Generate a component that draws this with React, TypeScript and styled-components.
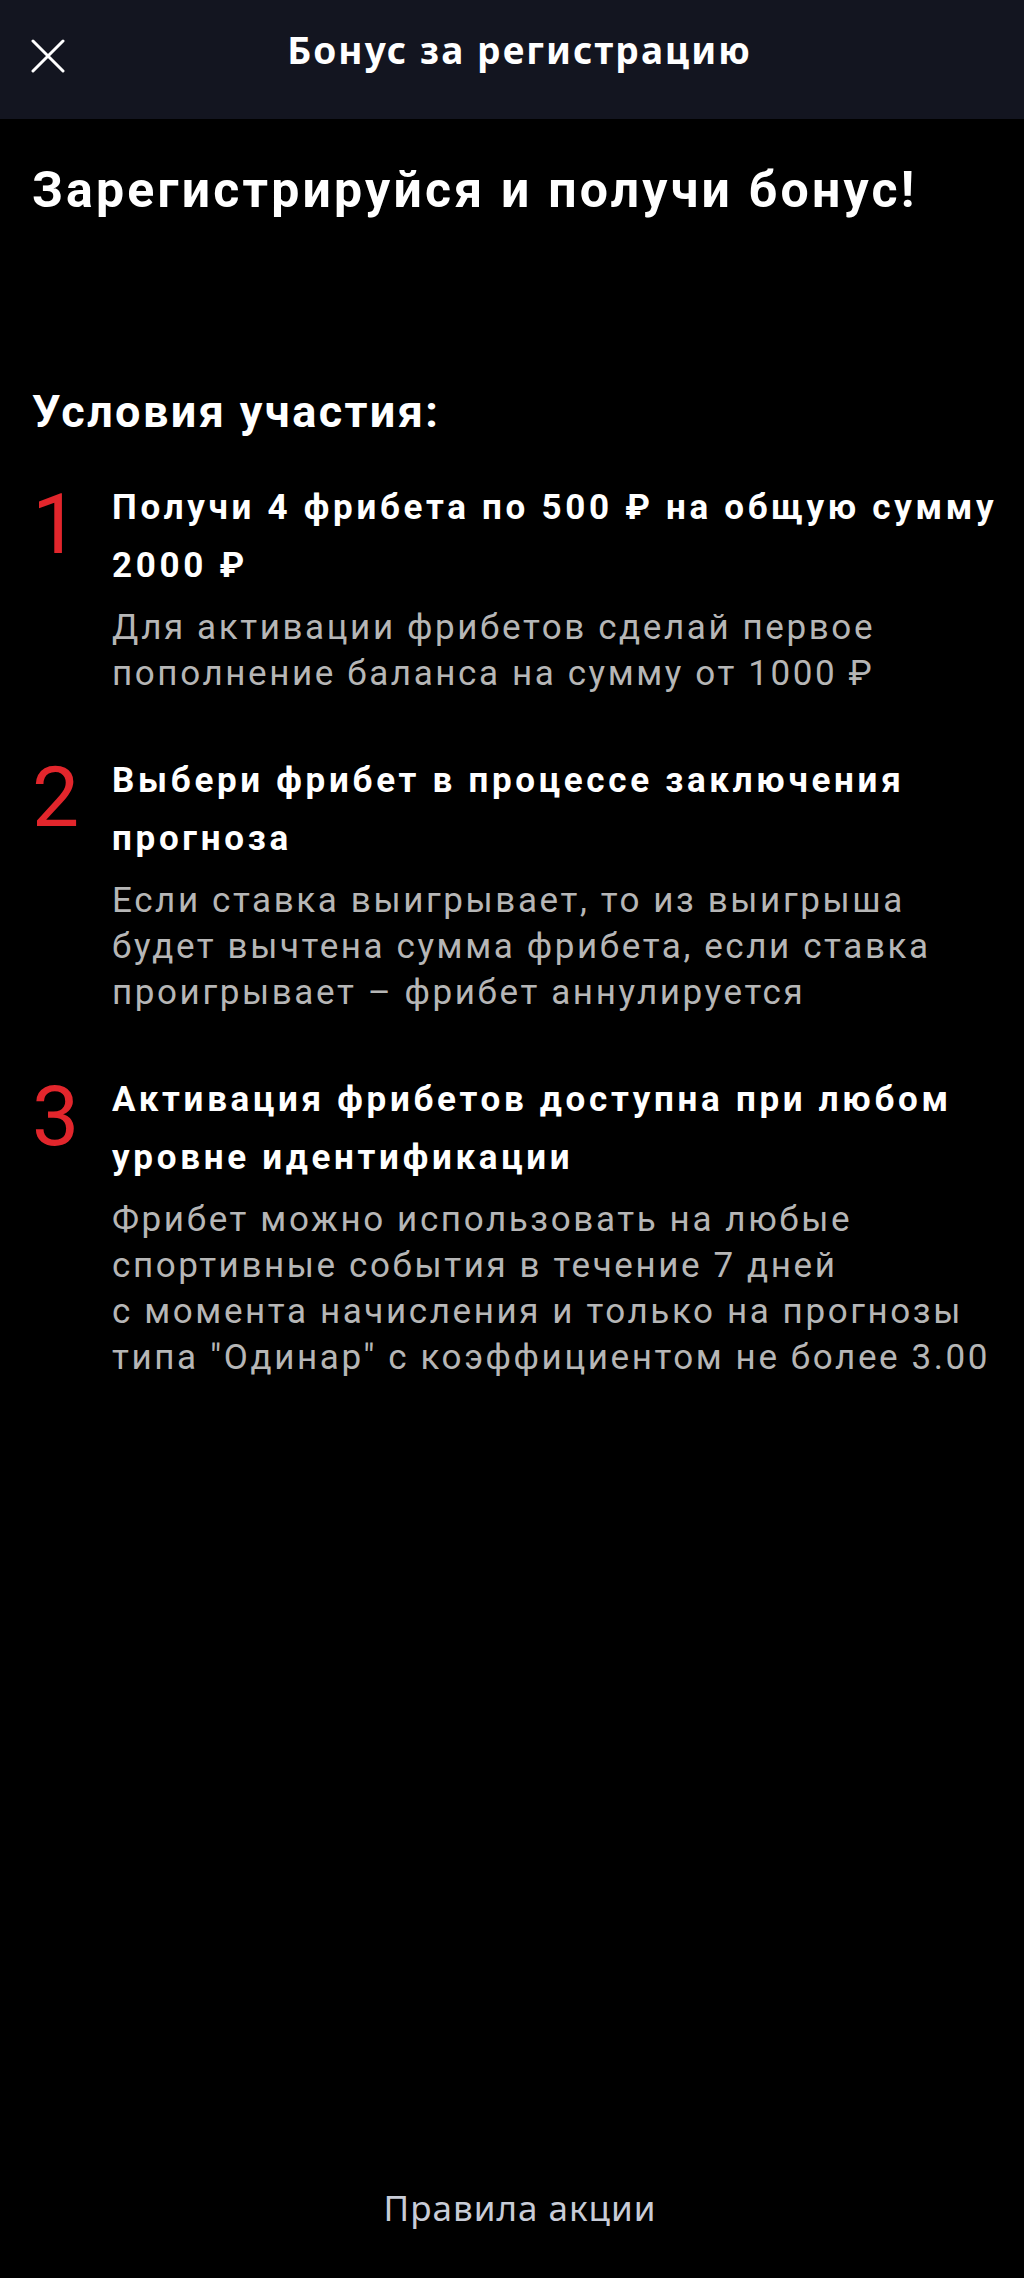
import React from "react";
import styled, { createGlobalStyle } from "styled-components";

const GlobalStyle = createGlobalStyle`
  html, body {
    margin: 0;
    padding: 0;
    background: #000000;
  }
  * {
    box-sizing: border-box;
  }
`;

const Page = styled.div`
  min-height: 2278px;
  display: flex;
  flex-direction: column;
  background: #000000;
  color: #ffffff;
  font-family: Roboto, "Liberation Sans", sans-serif;
`;

const Header = styled.header`
  height: 119px;
  background: #131520;
  display: grid;
  grid-template-columns: 96px 1fr 96px;
  align-items: center;
  padding: 0 16px 8px 31px;
`;

const CloseButton = styled.button`
  width: 34px;
  height: 34px;
  padding: 0;
  border: 0;
  background: transparent;
  color: #ffffff;
  display: flex;
  align-items: center;
  justify-content: center;
  cursor: pointer;
`;

const HeaderTitle = styled.h1`
  margin: 0 0 11px;
  text-align: center;
  font-family: "Noto Sans", "Open Sans", sans-serif;
  font-size: 37px;
  font-weight: 700;
  line-height: 48px;
  letter-spacing: 2.1px;
`;

const Content = styled.main`
  flex: 1;
  padding: 41px 4px 0 32px;
`;

const Headline = styled.h2`
  margin: 0;
  font-size: 50px;
  font-weight: 700;
  line-height: 60px;
  letter-spacing: 3.2px;
`;

const SectionTitle = styled.h3`
  margin: 165px 0 40px;
  font-size: 45px;
  font-weight: 700;
  line-height: 54px;
  letter-spacing: 2.4px;
`;

const Steps = styled.ol`
  list-style: none;
  margin: 0;
  padding: 0;
  display: flex;
  flex-direction: column;
  gap: 55px;
`;

const Step = styled.li`
  display: grid;
  grid-template-columns: 80px 1fr;
  align-items: start;
`;

const StepNumber = styled.span`
  margin-top: 5px;
  font-size: 84px;
  font-weight: 400;
  line-height: 82px;
  color: #e2262c;
`;

const StepTitle = styled.div`
  font-size: 35px;
  font-weight: 700;
  line-height: 58px;
  letter-spacing: 3.7px;
`;

const StepText = styled.p`
  margin: 10px 0 0;
  font-size: 35px;
  font-weight: 400;
  line-height: 46px;
  letter-spacing: 2.6px;
  color: #b6b6b6;
`;

const Footer = styled.footer`
  padding: 0 0 50px 16px;
  display: flex;
  justify-content: center;
`;

const RulesLink = styled.a`
  font-family: "Noto Sans", "Open Sans", sans-serif;
  font-size: 35px;
  line-height: 40px;
  letter-spacing: 1px;
  color: #c8ccd7;
  text-decoration: none;
`;

const steps = [
  {
    title: "Получи 4 фрибета по 500 ₽ на общую сумму 2000 ₽",
    text: ["Для активации фрибетов сделай первое", "пополнение баланса на сумму от 1000 ₽"],
  },
  {
    title: "Выбери фрибет в процессе заключения прогноза",
    text: [
      "Если ставка выигрывает, то из выигрыша",
      "будет вычтена сумма фрибета, если ставка",
      "проигрывает – фрибет аннулируется",
    ],
  },
  {
    title: "Активация фрибетов доступна при любом уровне идентификации",
    text: [
      "Фрибет можно использовать на любые",
      "спортивные события в течение 7 дней",
      "с момента начисления и только на прогнозы",
      "типа \"Одинар\" с коэффициентом не более 3.00",
    ],
  },
];

const CloseIcon = () => (
  <svg width="34" height="34" viewBox="0 0 34 34" fill="none">
    <path d="M2 2L32 32M32 2L2 32" stroke="currentColor" strokeWidth="3" strokeLinecap="round" />
  </svg>
);

export default function App() {
  return (
    <>
      <GlobalStyle />
      <Page>
        <Header>
          <CloseButton aria-label="Закрыть">
            <CloseIcon />
          </CloseButton>
          <HeaderTitle>Бонус за регистрацию</HeaderTitle>
          <span />
        </Header>
        <Content>
          <Headline>Зарегистрируйся и получи бонус!</Headline>
          <SectionTitle>Условия участия:</SectionTitle>
          <Steps>
            {steps.map((step, i) => (
              <Step key={i}>
                <StepNumber>{i + 1}</StepNumber>
                <div>
                  <StepTitle>{step.title}</StepTitle>
                  <StepText>
                    {step.text.map((line, j) => (
                      <React.Fragment key={j}>
                        {line}
                        {j < step.text.length - 1 && <br />}
                      </React.Fragment>
                    ))}
                  </StepText>
                </div>
              </Step>
            ))}
          </Steps>
        </Content>
        <Footer>
          <RulesLink href="#">Правила акции</RulesLink>
        </Footer>
      </Page>
    </>
  );
}
